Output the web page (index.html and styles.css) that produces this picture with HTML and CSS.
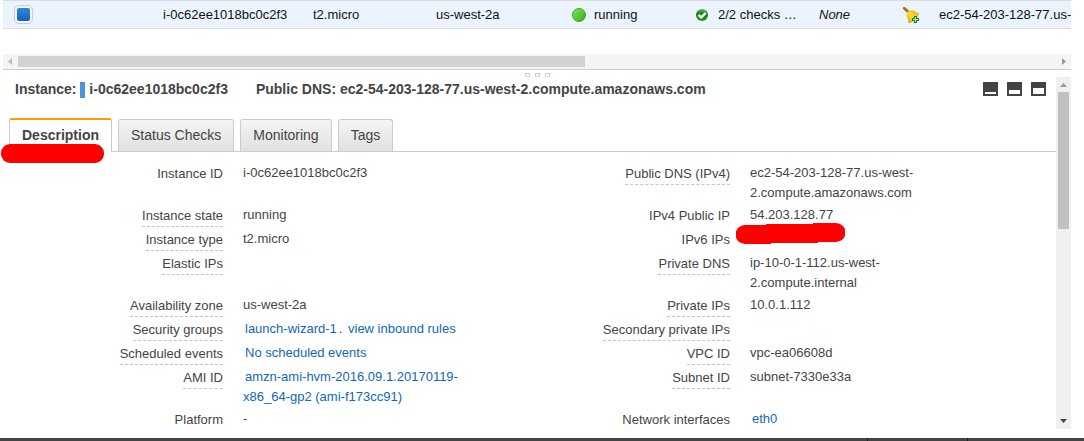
FILE: index.html
```html
<!DOCTYPE html>
<html lang="en">
<head>
<meta charset="utf-8">
<title>EC2 Instances</title>
<link rel="stylesheet" href="styles.css">
</head>
<body>
<main class="console">
  <section class="instances" aria-label="Instances">
    <table class="instances-table">
      <colgroup>
        <col class="col-check"><col class="col-id"><col class="col-type"><col class="col-zone"><col class="col-state"><col class="col-checks"><col class="col-alarm"><col class="col-bell"><col>
      </colgroup>
      <tbody>
        <tr>
          <td class="check-cell"><input class="row-check" type="checkbox" checked aria-label="Select instance i-0c62ee1018bc0c2f3"></td>
          <td>i-0c62ee1018bc0c2f3</td>
          <td>t2.micro</td>
          <td>us-west-2a</td>
          <td><span class="status"><svg class="dot" viewBox="0 0 14 14" aria-hidden="true"><defs><linearGradient id="g-dot" x1="0" y1="0" x2="1" y2="1"><stop offset="0" stop-color="#86e35c"/><stop offset="1" stop-color="#3aae18"/></linearGradient></defs><circle cx="7" cy="7" r="6.5" fill="url(#g-dot)" stroke="#3fa824"/></svg>running</span></td>
          <td><span class="status checks"><svg class="tick" viewBox="0 0 12 12" aria-hidden="true"><defs><linearGradient id="g-tick" x1="0" y1="0" x2="0" y2="1"><stop offset="0" stop-color="#6ab86a"/><stop offset=".4" stop-color="#0c800c"/><stop offset="1" stop-color="#239b23"/></linearGradient></defs><circle cx="6" cy="6" r="6" fill="url(#g-tick)"/><path d="M2.500 5.800 5.200 8.400 9.800 3.800" fill="none" stroke="#fff" stroke-width="2.400"/></svg>2/2 checks …</span></td>
          <td><em>None</em></td>
          <td><svg class="bell" viewBox="0 0 16 16" aria-hidden="true"><defs><linearGradient id="g-bell" x1="0" y1="1" x2="1" y2="0"><stop offset="0" stop-color="#d09410"/><stop offset=".45" stop-color="#ffdc30"/><stop offset="1" stop-color="#e2a410"/></linearGradient></defs><path d="M1.200 1.200 5.500 5" stroke="#a8700f" stroke-width="2.800" stroke-linecap="round"/><path d="M4.200 5.600C5.600 3.400 9 2.400 11.200 4c1.600 1.200 2.800 1.600 4.600 2.200.5 1-.2 2.300-1.500 3.800L9 15.200c-1.500.8-3.300 1-4 .3C5.300 13.500 5 12 4.400 10.500 3.600 8.800 3.200 7 4.200 5.600Z" fill="url(#g-bell)"/><path d="M11 9h3v2h2v3h-2v2h-3v-2H9v-3h2Z" fill="#128012"/><path d="M12 10h1v2h2v1h-2v2h-1v-2h-2v-1h2Z" fill="#b6f59c"/></svg></td>
          <td>ec2-54-203-128-77.us-</td>
        </tr>
      </tbody>
    </table>
  </section>

  <div class="hscroll" aria-hidden="true">
    <svg class="arrow light" viewBox="0 0 15 15"><path d="M5 7.500 9 4v7Z"/></svg>
    <div class="hscroll-track"><div class="hscroll-thumb"></div></div>
    <svg class="arrow mid" viewBox="0 0 15 15"><path d="M10 7.500 6 4v7Z"/></svg>
  </div>

  <div class="splitter" aria-hidden="true"><i class="grip"></i><i class="grip"></i><i class="grip"></i></div>

  <section class="pane">
    <div class="details">
      <header class="details-head">
        <h2 class="title">Instance: <span class="mark"></span>i-0c62ee1018bc0c2f3</h2>
        <h2 class="title dns">Public DNS: ec2-54-203-128-77.us-west-2.compute.amazonaws.com</h2>
        <div class="sizes">
          <button class="size" type="button" aria-label="Minimize pane"><span class="size-fill small"></span></button>
          <button class="size" type="button" aria-label="Split pane"><span class="size-fill medium"></span></button>
          <button class="size" type="button" aria-label="Maximize pane"><span class="size-fill large"></span></button>
        </div>
      </header>

      <div class="tabs" role="tablist">
        <button class="tab active" type="button" role="tab" aria-selected="true">Description<svg class="marker tab-marker" viewBox="0 0 103 19" aria-hidden="true"><rect width="103" height="19" rx="9"/></svg></button>
        <button class="tab" type="button" role="tab" aria-selected="false">Status Checks</button>
        <button class="tab" type="button" role="tab" aria-selected="false">Monitoring</button>
        <button class="tab" type="button" role="tab" aria-selected="false">Tags</button>
      </div>

      <dl class="fields">
        <dt>Instance ID</dt><dd>i-0c62ee1018bc0c2f3</dd>
        <dt class="hint">Public DNS (IPv4)</dt><dd>ec2-54-203-128-77.us-west-2.compute.amazonaws.com</dd>

        <dt class="hint">Instance state</dt><dd>running</dd>
        <dt>IPv4 Public IP</dt><dd>54.203.128.77</dd>

        <dt class="hint">Instance type</dt><dd>t2.micro</dd>
        <dt>IPv6 IPs</dt><dd class="marked"><svg class="marker ip-marker" viewBox="0 0 109 21" aria-hidden="true"><path d="M9 2H30V1H77V0H100A9 9 0 0 1 100 19H82V20H35V21H9A9 9 0 0 1 9 2Z"/></svg></dd>

        <dt class="hint">Elastic IPs</dt><dd></dd>
        <dt class="hint">Private DNS</dt><dd>ip-10-0-1-112.us-west-2.compute.internal</dd>

        <dt class="hint">Availability zone</dt><dd>us-west-2a</dd>
        <dt class="hint">Private IPs</dt><dd>10.0.1.112</dd>

        <dt class="hint">Security groups</dt><dd><a href="#">launch-wizard-1</a>. <a href="#">view inbound rules</a></dd>
        <dt class="hint">Secondary private IPs</dt><dd></dd>

        <dt class="hint">Scheduled events</dt><dd><a href="#">No scheduled events</a></dd>
        <dt class="hint">VPC ID</dt><dd>vpc-ea06608d</dd>

        <dt class="hint">AMI ID</dt><dd><a href="#">amzn-ami-hvm-2016.09.1.20170119-x86_64-gp2 (ami-f173cc91)</a></dd>
        <dt class="hint">Subnet ID</dt><dd>subnet-7330e33a</dd>

        <dt>Platform</dt><dd>-</dd>
        <dt>Network interfaces</dt><dd><a href="#">eth0</a></dd>
      </dl>
    </div>

    <div class="vscroll" aria-hidden="true">
      <svg class="arrow mid" viewBox="0 0 15 15"><path d="M7.500 6 11 10H4Z"/></svg>
      <div class="vscroll-track"><div class="vscroll-thumb"></div></div>
      <svg class="arrow dark" viewBox="0 0 15 15"><path d="M7.500 9 11 5H4Z"/></svg>
    </div>
  </section>
</main>
<footer class="bottom-bar"><span class="bottom-item"></span><span class="bottom-item"></span></footer>
</body>
</html>
```
FILE: styles.css
```css
* {
  box-sizing: border-box;
}

body {
  margin: 0;
  min-height: 100vh;
  display: flex;
  flex-direction: column;
  background: #fff;
  color: #444;
  font: 13px/20px "Liberation Sans", Arial, sans-serif;
}

.console {
  flex: 1;
  display: flex;
  flex-direction: column;
  padding: 0 13px 0 3px;
}

/* Instance list */

.instances {
  overflow: hidden;
  padding-bottom: 25px;
}

.instances-table {
  width: 100%;
  table-layout: fixed;
  border-collapse: separate;
  border-spacing: 0;
  color: #111;
}

.instances-table td {
  height: 29px;
  padding: 0;
  white-space: nowrap;
  overflow: hidden;
  background: #eaf3fe;
  border-top: 1px solid #dcdcdc;
  border-bottom: 1px solid #dcdcdc;
}

.col-check { width: 160px; }
.col-id { width: 150px; }
.col-type { width: 123px; }
.col-zone { width: 136px; }
.col-state { width: 124px; }
.col-checks { width: 123px; }
.col-alarm { width: 84px; }
.col-bell { width: 36px; }

.instances-table .check-cell {
  padding-left: 11px;
}

.row-check {
  appearance: none;
  display: block;
  width: 19px;
  height: 19px;
  margin: 0;
  border: 1px solid #ccc;
  border-radius: 5px;
  background: #f6f6f6;
  padding: 2px;
}

.row-check:checked {
  background: linear-gradient(#2f87dc, #1465bd) content-box, #f6f6f6;
}

.status {
  display: flex;
  align-items: center;
  gap: 8px;
}

.status.checks {
  gap: 10px;
}

.dot {
  width: 14px;
  height: 14px;
}

.tick {
  width: 12px;
  height: 12px;
}

.bell {
  display: block;
  width: 16px;
  height: 16px;
}

/* Scroll bars */

.arrow {
  display: block;
  flex: none;
  width: 15px;
  height: 15px;
}

.arrow.light { fill: #bbb; }
.arrow.mid { fill: #999; }
.arrow.dark { fill: #444; }

.hscroll {
  display: flex;
  background: #f4f4f4;
  border-bottom: 1px solid #ccc;
}

.hscroll-track {
  flex: 1;
  padding: 2px 0;
}

.hscroll-thumb {
  width: 54.6%;
  height: 11px;
  background: #d2d2d2;
}

.vscroll {
  flex: none;
  display: flex;
  flex-direction: column;
  margin-bottom: 9px;
  background: #f0f0f0;
}

.vscroll-track {
  flex: 1;
  padding: 0 2px;
}

.vscroll-thumb {
  width: 11px;
  height: 137px;
  background: #c1c1c1;
}

.splitter {
  display: flex;
  justify-content: center;
  gap: 5px;
  padding: 3px 0 0;
}

.grip {
  width: 5px;
  height: 4px;
  border: 1px solid #ccc;
  border-bottom-color: #ddd;
  border-radius: 1px;
}

/* Details pane */

.pane {
  flex: 1;
  display: flex;
}

.details {
  flex: 1;
  min-width: 0;
}

.details-head {
  display: flex;
  align-items: flex-start;
  height: 24px;
  padding: 0 10px 0 12px;
}

.title {
  margin: 0;
  font-size: 14px;
  line-height: 24px;
  white-space: nowrap;
}

.title.dns {
  margin-left: 28px;
}

.mark {
  display: inline-block;
  width: 5px;
  height: 16px;
  margin-right: 4px;
  vertical-align: middle;
  background: #4f94d4;
}

.sizes {
  display: flex;
  gap: 9px;
  margin-left: auto;
  padding-top: 5px;
}

.size {
  display: flex;
  align-items: flex-end;
  width: 15px;
  height: 14px;
  padding: 2px;
  border: 0;
  background: #444;
}

.size-fill {
  width: 100%;
  background: #fff;
}

.size-fill.small { height: 2px; }
.size-fill.medium { height: 4px; }
.size-fill.large { height: 6px; }

.tabs {
  display: flex;
  align-items: flex-end;
  gap: 6px;
  margin-top: 17px;
  padding-left: 6px;
  border-bottom: 1px solid #ccc;
}

.tab {
  height: 32px;
  padding: 0 12px 2px;
  border: 1px solid #ccc;
  border-bottom: 0;
  border-radius: 3px 3px 0 0;
  background: linear-gradient(#f5f5f5, #e0e0e0);
  color: #444;
  font: 14px/20px "Liberation Sans", Arial, sans-serif;
}

.tab.active {
  position: relative;
  height: 34px;
  margin-bottom: -1px;
  border-top: 2px solid #f90;
  background: #fff;
  font-weight: bold;
}

.marker {
  position: absolute;
  fill: #f00;
}

.tab-marker {
  left: -9px;
  top: 24px;
  width: 103px;
  height: 19px;
}

.ip-marker {
  left: -14px;
  top: -6px;
  width: 109px;
  height: 21px;
}

.fields {
  display: grid;
  grid-template-columns: 220fr 260fr 207fr 220fr;
  gap: 2px 20px;
  align-items: start;
  margin: 0;
  padding: 11px 86px 0 0;
}

.fields dt {
  justify-self: end;
  line-height: 21px;
  border-bottom: 1px solid transparent;
}

.fields dt.hint {
  border-bottom: 1px dashed #c4c4c4;
}

.fields dd {
  margin: 0;
}

.fields dd.marked {
  position: relative;
}

.fields a {
  padding: 0 2px;
  color: #1166bb;
  text-decoration: none;
}

.bottom-bar {
  display: flex;
  justify-content: flex-end;
  height: 3px;
  padding-right: 116px;
  background: #444;
}

.bottom-item {
  width: 1px;
  background: #1c1c1c;
}

.bottom-item:first-child {
  margin-right: 99px;
}
```
